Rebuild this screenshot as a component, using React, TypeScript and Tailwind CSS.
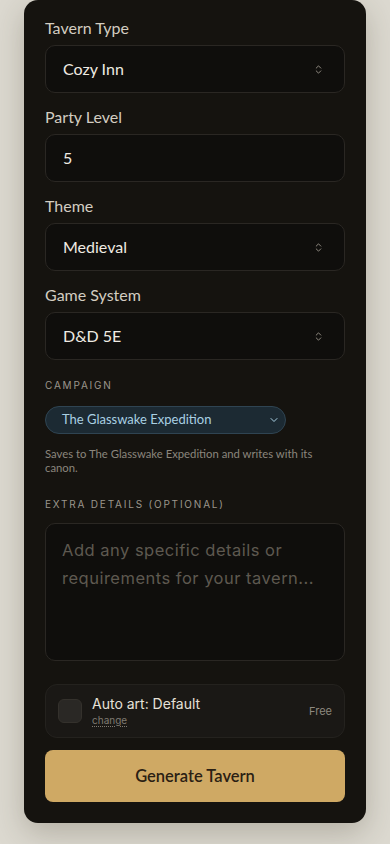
import { ChevronDown, ChevronsUpDown } from "lucide-react";

const lato = "font-['Lato','Noto_Sans',sans-serif]";
const grotesk = "font-['Inter','DejaVu_Sans',sans-serif]";

const SelectField = ({ label, value, icon = true }: { label: string; value: string; icon?: boolean }) => {
  return (
    <div className="flex flex-col">
      <label className={`${lato} text-[16px] leading-[24px] text-[#d3cdc1] mb-[5px]`}>{label}</label>
      <div className="h-[48px] rounded-[10px] border border-[#2a2723] bg-[#0f0e0c] pl-[17px] pr-[20px] flex items-center justify-between">
        <span className={`${lato} text-[16px] text-[#efebe3]`}>{value}</span>
        {icon && <ChevronsUpDown className="w-[11px] h-[11px] text-[#9a958b]" strokeWidth={2} />}
      </div>
    </div>
  );
};

export default function App() {
  return (
    <div className="min-h-screen bg-[#dcd9d0] px-6 pb-[22px]">
      <div className="w-[342px] mx-auto rounded-[14px] bg-[#15130f] px-[21px] pt-4 pb-[21px] shadow-[0_10px_30px_rgba(60,50,30,0.25)] flex flex-col">
        <div className="flex flex-col gap-3">
          <SelectField label="Tavern Type" value="Cozy Inn" />
          <SelectField label="Party Level" value="5" icon={false} />
          <SelectField label="Theme" value="Medieval" />
          <SelectField label="Game System" value="D&D 5E" />
        </div>

        {/* Campaign */}
        <div className={`${grotesk} mt-[17px] text-[10px] leading-[16px] tracking-[0.18em] text-[#9b968c]`}>CAMPAIGN</div>
        <div className="mt-[13px] w-[241px] h-[28px] rounded-full border border-[#2f4452] bg-[#1c2a33] pl-[16px] pr-[5px] flex items-center justify-between">
          <span className={`${lato} text-[13px] text-[#a9d0e3]`}>The Glasswake Expedition</span>
          <ChevronDown className="w-[12px] h-[12px] text-[#a9d0e3]" strokeWidth={2} />
        </div>
        <p className={`${lato} mt-[13px] text-[11.3px] leading-[14px] text-[#8b867d]`}>
          Saves to The Glasswake Expedition and writes with its canon.
        </p>

        {/* Extra details */}
        <div className={`${grotesk} mt-[21px] text-[10px] leading-[16px] tracking-[0.18em] text-[#9b968c]`}>EXTRA DETAILS (OPTIONAL)</div>
        <textarea
          className={`${grotesk} mt-[11px] h-[138px] resize-none rounded-[10px] border border-[#2a2723] bg-[#0f0e0c] px-4 pt-[12px] text-[16.5px] leading-[28px] tracking-[0.03em] text-[#efebe3] placeholder:text-[#5e5950] outline-none`}
          placeholder="Add any specific details or requirements for your tavern..."
        />

        {/* Auto art */}
        <div className="mt-[23px] h-[54px] rounded-[12px] border border-[#24221e] bg-[#1a1815] pl-[12px] pr-[12px] flex items-center">
          <div className="w-[24px] h-[24px] rounded-[6px] border border-[#34312c] bg-[#2a2825]" />
          <div className="ml-[10px] flex flex-col flex-1">
            <span className={`${grotesk} text-[14px] leading-[18px] text-[#e6e1d8]`}>Auto art: Default</span>
            <span className={`${grotesk} text-[10px] leading-[14px] text-[#7f7a71] underline decoration-dotted underline-offset-2`}>change</span>
          </div>
          <span className={`${grotesk} text-[11px] text-[#8d887f]`}>Free</span>
        </div>

        <button className={`${lato} mt-[12px] h-[52px] rounded-[8px] bg-[#cfa964] text-[16.5px] font-semibold text-[#2a2013]`}>
          Generate Tavern
        </button>
      </div>
    </div>
  );
}
